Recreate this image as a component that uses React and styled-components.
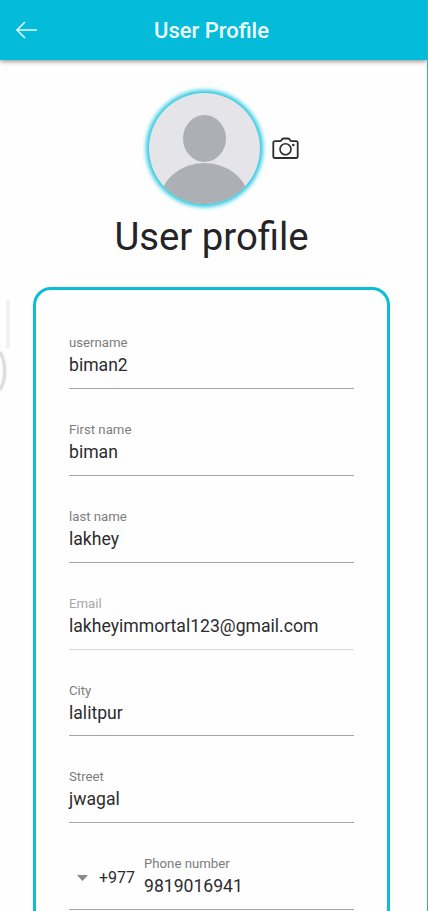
import React from "react";
import styled, { createGlobalStyle } from "styled-components";

const Global = createGlobalStyle`
  * { box-sizing: border-box; }
  html, body { margin: 0; background: #fefefe; }
  body { font-family: Roboto, "Open Sans", sans-serif; color: #2c2c2e; overflow: hidden; }
`;

const Screen = styled.div`
  position: relative;
  width: 428px;
  height: 911px;
  overflow: hidden;
  border-right: 1px solid #2cb4c8;
  display: flex;
  flex-direction: column;
`;

const Toolbar = styled.header`
  flex: none;
  height: 60px;
  display: grid;
  grid-template-columns: 60px 1fr 65px;
  align-items: center;
  background: #04bbda;
  box-shadow: 0 1px 5px rgba(0, 0, 0, 0.5);
`;

const BackButton = styled.button`
  border: 0;
  padding: 0 0 0 15px;
  background: none;
  display: flex;
`;

const Title = styled.h1`
  margin: 0;
  padding: 1px 0 0 1px;
  text-align: center;
  font-size: 22px;
  line-height: 26px;
  font-weight: 500;
  color: #eefcff;
`;

const ProfileHeader = styled.section`
  flex: none;
  height: 227px;
  padding-top: 33px;
  display: flex;
  flex-direction: column;
  align-items: center;
`;

const AvatarRow = styled.div`
  width: 100%;
  display: flex;
  align-items: center;
  gap: 12px;
  padding-left: 149px;
`;

const Avatar = styled.div`
  width: 111px;
  height: 111px;
  border-radius: 50%;
  overflow: hidden;
  background: #e5e5e9;
  box-shadow: 0 0 4px 3px #2cc8df;
  svg { display: block; }
`;

const Name = styled.h2`
  margin: 9px 0 0;
  padding-right: 4px;
  font-size: 38.3px;
  line-height: 48px;
  font-weight: 400;
  color: #242426;
`;

const Card = styled.main`
  flex: none;
  width: 357px;
  height: 660px;
  margin-left: 33px;
  padding: 44px 33px 0;
  border: 3px solid #0bbdd7;
  border-radius: 18px;
`;

const Field = styled.label`
  display: flex;
  flex-direction: column;
  height: 54.9px;
  margin-bottom: 32px;
  border-bottom: 1px solid ${(p) => (p.$disabled ? "#dcdcdc" : "#a6a6a6")};
`;

const Label = styled.span`
  font-size: 13.2px;
  line-height: 18px;
  height: 18px;
  margin-bottom: 1px;
  color: ${(p) => (p.$disabled ? "#a8a8a8" : "#7c7c7e")};
`;

const Value = styled.span`
  font-size: 17.6px;
  line-height: 24px;
  color: #2c2c2e;
`;

const PhoneField = styled.div`
  display: flex;
  align-items: flex-start;
  height: 55px;
  border-bottom: 1px solid #a6a6a6;
`;

const Country = styled.div`
  width: 75px;
  padding: 0 9px 0 8px;
  display: flex;
  align-items: center;
  justify-content: space-between;
  height: 44px;
  padding-top: 1px;
  font-size: 16px;
  svg { margin-top: 1px; }
`;

const PhoneText = styled.label`
  display: flex;
  flex-direction: column;
`;

const EdgeHandle = styled.div`
  position: absolute;
  left: 0;
  top: 300px;
  width: 10px;
  height: 95px;
  svg { display: block; }
`;

const fields = [
  { label: "username", value: "biman2" },
  { label: "First name", value: "biman" },
  { label: "last name", value: "lakhey" },
  { label: "Email", value: "lakheyimmortal123@gmail.com", disabled: true },
  { label: "City", value: "lalitpur" },
  { label: "Street", value: "jwagal" },
];

const BackIcon = () => (
  <svg width="24" height="20" viewBox="0 0 24 20" fill="none" stroke="#e4faff" strokeWidth="1.6">
    <path d="M10 2 2 10l8 8M2 10h20" />
  </svg>
);

const CameraIcon = () => (
  <svg width="27" height="23" viewBox="0 0 27 23" fill="none" stroke="#2c2c2e" strokeWidth="1.8" strokeLinejoin="round">
    <path d="M2.800 4.200h4.700Q9 4.200 9.600 2.800Q10.200 1.500 11.500 1.500h4.500Q17.300 1.500 17.900 2.800Q18.500 4.200 20 4.200h4.200a1.500 1.500 0 0 1 1.500 1.500v13.800a1.500 1.500 0 0 1-1.500 1.500H2.800a1.500 1.500 0 0 1-1.500-1.500V5.700a1.500 1.500 0 0 1 1.500-1.500z" />
    <circle cx="13.500" cy="12.200" r="5.500" strokeWidth="1.600" />
    <circle cx="21.300" cy="8" r="1.300" fill="#2c2c2e" stroke="none" />
  </svg>
);

export default function App() {
  return (
    <Screen>
      <Global />
      <Toolbar>
        <BackButton aria-label="Back"><BackIcon /></BackButton>
        <Title>User Profile</Title>
      </Toolbar>
      <ProfileHeader>
        <AvatarRow>
          <Avatar>
            <svg width="111" height="111" viewBox="0 0 111 111" fill="#acb0b5">
              <ellipse cx="55.5" cy="45.5" rx="21.5" ry="23.500" />
              <ellipse cx="55.5" cy="110" rx="45" ry="40" />
            </svg>
          </Avatar>
          <CameraIcon />
        </AvatarRow>
        <Name>User profile</Name>
      </ProfileHeader>
      <Card>
        {fields.map((f) => (
          <Field key={f.label} $disabled={f.disabled}>
            <Label $disabled={f.disabled}>{f.label}</Label>
            <Value>{f.value}</Value>
          </Field>
        ))}
        <PhoneField>
          <Country>
            <svg width="11" height="6" viewBox="0 0 11 6"><path d="M0 0h11L5.500 6z" fill="#88888a" /></svg>
            +977
          </Country>
          <PhoneText>
            <Label>Phone number</Label>
            <Value>9819016941</Value>
          </PhoneText>
        </PhoneField>
      </Card>
      <EdgeHandle>
        <svg width="10" height="95" viewBox="0 0 10 95" fill="none">
          <path d="M8 0v48" stroke="#f0f0f0" strokeWidth="3.500" />
          <path d="M0 52Q4.700 60 4.700 71T0 90" stroke="#dedede" strokeWidth="3.500" />
        </svg>
      </EdgeHandle>
    </Screen>
  );
}
